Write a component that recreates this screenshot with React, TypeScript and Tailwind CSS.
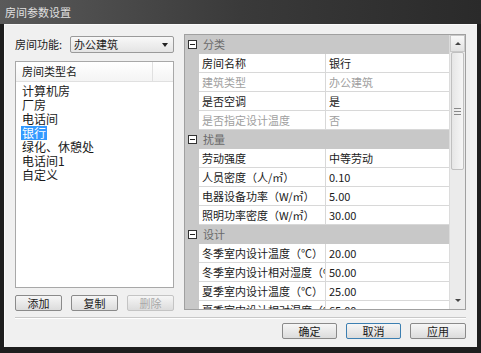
import React from "react";

const font = { fontFamily: '"Noto Sans CJK SC", "Noto Sans", sans-serif' };

type Row = { name: string; value: string; ro?: boolean };
type Cat = { title: string; rows: Row[] };

const cats: Cat[] = [
  {
    title: "分类",
    rows: [
      { name: "房间名称", value: "银行" },
      { name: "建筑类型", value: "办公建筑", ro: true },
      { name: "是否空调", value: "是" },
      { name: "是否指定设计温度", value: "否", ro: true },
    ],
  },
  {
    title: "扰量",
    rows: [
      { name: "劳动强度", value: "中等劳动" },
      { name: "人员密度（人/㎡）", value: "0.10" },
      { name: "电器设备功率（W/㎡）", value: "5.00" },
      { name: "照明功率密度（W/㎡）", value: "30.00" },
    ],
  },
  {
    title: "设计",
    rows: [
      { name: "冬季室内设计温度（℃）", value: "20.00" },
      { name: "冬季室内设计相对湿度（%）", value: "50.00" },
      { name: "夏季室内设计温度（℃）", value: "25.00" },
      { name: "夏季室内设计相对湿度（%）", value: "65.00" },
    ],
  },
];

const items = ["计算机房", "厂房", "电话间", "银行", "绿化、休憩处", "电话间1", "自定义"];

function MinusBox() {
  return (
    <div className="w-[9px] h-[9px] border border-[#333] bg-white flex items-center justify-center">
      <div className="w-[5px] h-[1px] bg-[#222]" />
    </div>
  );
}

function Btn({ label, disabled, focus, w }: { label: string; disabled?: boolean; focus?: boolean; w: string }) {
  return (
    <div
      className={`${w} h-[16px] rounded-[2px] border flex items-center justify-center text-[11px] leading-none bg-gradient-to-b from-[#f6f6f6] to-[#dcdcdc] ${
        disabled ? "border-[#c4c4c4] text-[#a8a8a8]" : focus ? "border-[#3c7fb1] text-[#1a1a1a]" : "border-[#8a8a8a] text-[#1a1a1a]"
      }`}
    >
      {label}
    </div>
  );
}

export default function App() {
  return (
    <div className="w-[481px] h-[353px] bg-[#1e1e1e] flex flex-col overflow-hidden" style={font}>
      <div className="h-[24px] flex items-center pl-[5px] bg-gradient-to-r from-[#5a5a5a] via-[#3a3a3a] to-[#2a2a2a] text-[#e0e0e0] text-[11px]">
        房间参数设置
      </div>
      <div className="flex-1 ml-[4px] mr-[4px] mb-[6px] bg-[#f0f0f0] border-l border-t border-[#fafafa] flex flex-col pl-[10px] pr-[11px] pt-[10px]">
        <div className="flex gap-[10px]">
          <div className="w-[159px] flex flex-col">
            <div className="h-[17px] flex items-center mt-[1px]">
              <span className="text-[11px] text-[#1a1a1a] w-[55px]">房间功能:</span>
              <div className="flex-1 h-[17px] border border-[#9a9a9a] rounded-[2px] bg-gradient-to-b from-[#f8f8f8] to-[#e4e4e4] flex items-center justify-between px-[3px]">
                <span className="text-[11px] text-[#1a1a1a]">办公建筑</span>
                <span className="w-0 h-0 border-l-[3px] border-r-[3px] border-t-[4px] border-l-transparent border-r-transparent border-t-[#222] mr-[2px]" />
              </div>
            </div>
            <div className="mt-[8px] h-[227px] border border-[#a8a8a8] bg-white flex flex-col">
              <div className="h-[20px] flex border-b border-[#e0e0e0] bg-gradient-to-b from-white to-[#f4f4f4]">
                <div className="w-[137px] border-r border-[#e0e0e0] flex items-center pl-[6px] text-[11px] text-[#1a1a1a]">房间类型名</div>
              </div>
              <div className="flex flex-col pt-[2px] pl-[5px]">
                {items.map((it) => (
                  <div key={it} className="h-[14px] flex items-center">
                    <span
                      className={`text-[12px] leading-[14px] px-[1px] ${
                        it === "银行" ? "bg-[#3399ff] text-white" : "text-[#1a1a1a]"
                      }`}
                    >
                      {it}
                    </span>
                  </div>
                ))}
              </div>
            </div>
            <div className="mt-[7px] flex justify-between">
              <Btn label="添加" w="w-[47px]" />
              <Btn label="复制" w="w-[47px]" />
              <Btn label="删除" w="w-[47px]" disabled />
            </div>
          </div>
          <div className="w-[282px] h-[276px] -mt-[1px] border border-[#a0a0a0] bg-[#f0f0f0] flex">
            <div className="w-[264px] flex flex-col overflow-hidden">
              {cats.map((c) => (
                <React.Fragment key={c.title}>
                  <div className="h-[19px] shrink-0 bg-[#c8c8c8] flex items-center pl-[3px] gap-[6px]">
                    <MinusBox />
                    <span className="text-[11px] text-[#6a6a6a]">{c.title}</span>
                  </div>
                  {c.rows.map((r) => (
                    <div key={r.name} className="h-[19px] shrink-0 flex">
                      <div className="w-[14px] bg-[#c8c8c8]" />
                      <div
                        className={`w-[127px] bg-white border-b border-r border-[#d8d8d8] flex items-center pl-[3px] overflow-hidden whitespace-nowrap text-[11px] ${
                          r.ro ? "text-[#a0a0a0]" : "text-[#1a1a1a]"
                        }`}
                      >
                        {r.name}
                      </div>
                      <div
                        className={`flex-1 bg-white border-b border-[#d8d8d8] flex items-center pl-[3px] text-[11px] ${
                          r.ro ? "text-[#a0a0a0]" : "text-[#1a1a1a]"
                        }`}
                      >
                        {r.value}
                      </div>
                    </div>
                  ))}
                </React.Fragment>
              ))}
            </div>
            <div className="w-[16px] bg-[#ebebeb] border-l border-[#dcdcdc] flex flex-col">
              <div className="h-[17px] border border-[#c8c8c8] bg-gradient-to-b from-[#f8f8f8] to-[#e2e2e2] flex items-center justify-center">
                <span className="w-0 h-0 border-l-[3px] border-r-[3px] border-b-[3px] border-l-transparent border-r-transparent border-b-[#444]" />
              </div>
              <div className="h-[118px] mx-[1px] border border-[#c0c0c0] rounded-[2px] bg-gradient-to-r from-[#e6e6e6] to-[#f6f6f6] flex items-center justify-center">
                <div className="flex flex-col gap-[2px]">
                  <div className="w-[7px] h-[1px] bg-[#888]" />
                  <div className="w-[7px] h-[1px] bg-[#888]" />
                  <div className="w-[7px] h-[1px] bg-[#888]" />
                </div>
              </div>
              <div className="flex-1" />
              <div className="h-[17px] flex items-center justify-center">
                <span className="w-0 h-0 border-l-[3px] border-r-[3px] border-t-[3px] border-l-transparent border-r-transparent border-t-[#444]" />
              </div>
            </div>
          </div>
        </div>
        <div className="mt-[6px] h-[2px] border-t border-[#c8c8c8] border-b border-b-white" />
        <div className="mt-[4px] flex justify-end gap-[9px]">
          <Btn label="确定" w="w-[55px]" />
          <Btn label="取消" w="w-[55px]" focus />
          <Btn label="应用" w="w-[56px]" />
        </div>
      </div>
    </div>
  );
}
